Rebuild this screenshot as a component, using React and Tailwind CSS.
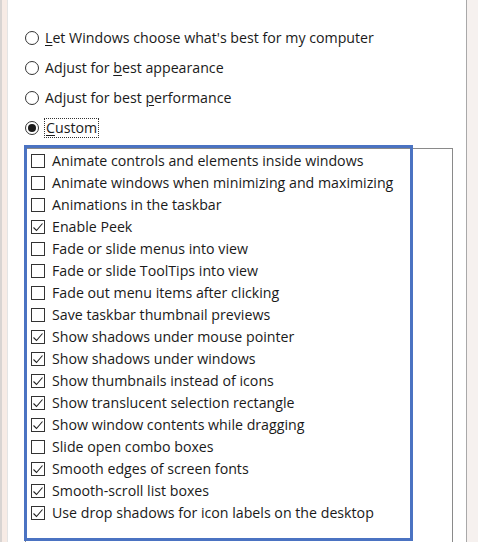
import React from "react";

const options = [
  { label: "Let Windows choose what's best for my computer", at: 0 },
  { label: "Adjust for best appearance", at: 11 },
  { label: "Adjust for best performance", at: 16 },
];

const effects = [
  ["Animate controls and elements inside windows", false],
  ["Animate windows when minimizing and maximizing", false],
  ["Animations in the taskbar", false],
  ["Enable Peek", true],
  ["Fade or slide menus into view", false],
  ["Fade or slide ToolTips into view", false],
  ["Fade out menu items after clicking", false],
  ["Save taskbar thumbnail previews", false],
  ["Show shadows under mouse pointer", true],
  ["Show shadows under windows", true],
  ["Show thumbnails instead of icons", true],
  ["Show translucent selection rectangle", true],
  ["Show window contents while dragging", true],
  ["Slide open combo boxes", false],
  ["Smooth edges of screen fonts", true],
  ["Smooth-scroll list boxes", true],
  ["Use drop shadows for icon labels on the desktop", true],
];

const Radio = ({ checked }) => (
  <span className="w-[14px] h-[14px] rounded-full border border-[#333] bg-white flex items-center justify-center shrink-0">
    {checked && <span className="w-[8px] h-[8px] rounded-full bg-[#1a1a1a]" />}
  </span>
);

const Check = ({ checked }) => (
  <span className="w-[14px] h-[14px] border border-[#333] bg-white flex items-center justify-center shrink-0">
    {checked && (
      <svg width="12" height="12" viewBox="0 0 12 12">
        <path d="M1.5 6.5 L4.5 9.5 L10.5 2.5" fill="none" stroke="#222" strokeWidth="1.1" />
      </svg>
    )}
  </span>
);

const Label = ({ text, at }) => (
  <span>
    {text.slice(0, at)}
    <span className="underline underline-offset-2">{text.slice(at, at + 1)}</span>
    {text.slice(at + 1)}
  </span>
);

export default function App() {
  return (
    <div
      className="w-[478px] h-[542px] flex overflow-hidden bg-white text-[#1a1a1a]"
      style={{ fontFamily: "'Open Sans', 'Noto Sans', sans-serif" }}
    >
      <div className="w-[8px] shrink-0 bg-[#f7ebe5] border-l-2 border-[#d8d4d2] border-r border-r-[#e4e4e4]" />

      <div className="flex-1 pl-[17px] pt-[23px] text-[14.2px]">
        {options.map((o) => (
          <div key={o.label} className="h-[30px] flex items-center gap-[6px]">
            <Radio />
            <Label text={o.label} at={o.at} />
          </div>
        ))}
        <div className="h-[30px] flex items-center gap-[5px]">
          <Radio checked />
          <span className="border border-dotted border-[#333] px-px leading-[18px]">
            <span className="underline underline-offset-2">C</span>ustom
          </span>
        </div>

        <div className="relative mt-[5px] w-[428px] h-[420px] border border-[#8a8a8a] pt-px">
          {effects.map(([t, c]) => (
            <div key={t} className="h-[22px] flex items-center gap-[7px] pl-[5px]">
              <Check checked={c} />
              <span>{t}</span>
            </div>
          ))}
          <div className="absolute left-[-2px] top-[-4px] w-[389px] h-[396px] border-[3px] border-[#4b73c2] pointer-events-none" />
        </div>
      </div>

      <div className="w-[12px] shrink-0 bg-[#f6f1ef] border-l border-[#a9a9a9]" />
    </div>
  );
}
